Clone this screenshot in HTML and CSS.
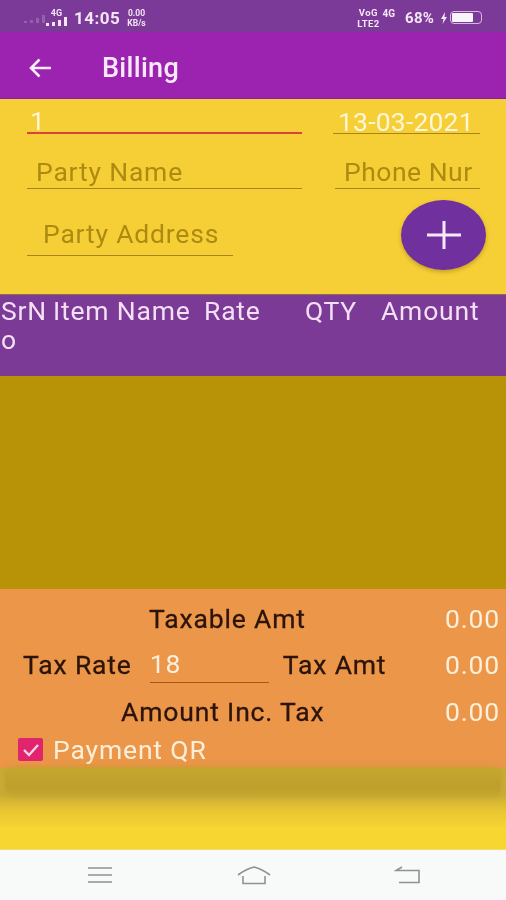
FILE: index.html
```html
<!DOCTYPE html>
<html lang="en">
<head>
<meta charset="utf-8">
<title>Billing</title>
<link rel="stylesheet" href="styles.css">
</head>
<body>
<div class="screen">
  <header class="status">
    <div class="status-left">
      <svg class="sig-faint" width="28" height="12" viewBox="0 0 28 12"><g fill="#a878b8"><rect x="0" y="9" width="3" height="2"/><rect x="6" y="8" width="3" height="3"/><rect x="12" y="6" width="3" height="5"/><rect x="18" y="3" width="3" height="8"/></g></svg>
      <div class="sig">
        <span class="tiny">4G</span>
        <svg width="21" height="9" viewBox="0 0 21 9"><g fill="#f3e6f6"><rect x="0" y="6" width="3" height="3"/><rect x="6" y="5" width="3" height="4"/><rect x="12" y="3" width="3" height="6"/><rect x="18" y="0" width="3" height="9"/></g></svg>
      </div>
      <span class="clock">14:05</span>
      <span class="speed">0.00<br>KB/s</span>
    </div>
    <div class="status-right">
      <span class="speed">VoG<br>LTE2</span>
      <span class="tiny net">4G</span>
      <span class="clock pct">68%</span>
      <svg width="8" height="12" viewBox="0 0 8 12"><path d="M5 0 1 7h2.500L2.500 12 7 5H4.500z" fill="#f3e6f6"/></svg>
      <div class="battery"><div class="battery-fill"></div></div>
    </div>
  </header>

  <div class="toolbar">
    <svg class="back" width="24" height="22" viewBox="0 0 24 22"><path d="M23 11H3M11.500 2.500 3 11l8.500 8.500" fill="none" stroke="#fbeefc" stroke-width="2.600"/></svg>
    <h1 class="title">Billing</h1>
  </div>

  <section class="form">
    <div class="row row-one">
      <div class="field field-main field-active"><span class="val">1</span></div>
      <div class="field field-side"><span class="val date">13-03-2021</span></div>
    </div>
    <div class="row row-two">
      <div class="field field-main"><span class="hint">Party Name</span></div>
      <div class="field field-side field-phone"><span class="hint hint-phone">Phone Nur</span></div>
    </div>
    <div class="row row-three">
      <div class="field field-addr"><span class="hint">Party Address</span></div>
      <button class="fab" type="button" aria-label="Add">
        <svg width="34" height="28" viewBox="0 0 34 28"><path d="M0 14h34M17 0v28" stroke="#f7e9fb" stroke-width="3" fill="none"/></svg>
      </button>
    </div>
  </section>

  <div class="table-head">
    <span class="srno">SrNo</span>
    <span>Item Name</span>
    <span>Rate</span>
    <span>QTY</span>
    <span>Amount</span>
  </div>

  <div class="list"></div>

  <section class="totals">
    <div class="total-row row-taxable">
      <span class="label">Taxable Amt</span>
      <span class="amount">0.00</span>
    </div>
    <div class="total-row row-rate">
      <span class="label">Tax Rate</span>
      <div class="rate-input"><span class="rate-val">18</span></div>
      <span class="label">Tax Amt</span>
      <span class="amount">0.00</span>
    </div>
    <div class="total-row row-inc">
      <span class="label">Amount Inc. Tax</span>
      <span class="amount">0.00</span>
    </div>
    <div class="qr">
      <span class="check">
        <svg width="18" height="14" viewBox="0 0 18 14"><path d="M2 7l5 5 9-10" fill="none" stroke="#f9d4e4" stroke-width="2.400"/></svg>
      </span>
      <span class="qr-label">Payment QR</span>
    </div>
  </section>

  <div class="under">
    <div class="under-shadow"></div>
  </div>

  <nav class="navbar">
    <svg width="26" height="18" viewBox="0 0 26 18"><path d="M1 2h24M1 9h24M1 16h24" stroke="#8f9294" stroke-width="1.600" fill="none"/></svg>
    <svg width="34" height="20" viewBox="0 0 34 20"><path d="M1 10Q9 4 17 2 25 4 33 10M6 11v7.500h22V11" stroke="#8f9294" stroke-width="1.600" fill="none"/></svg>
    <svg width="26" height="18" viewBox="0 0 26 18"><path d="M8 1 2 4.500 25 4.500V16.500H5" stroke="#8f9294" stroke-width="1.600" fill="none"/></svg>
  </nav>
</div>
</body>
</html>
```

FILE: styles.css
```css
* { box-sizing: border-box; }
html, body { margin: 0; padding: 0; }
body { background: #f8f9f9; font-family: Roboto, "Liberation Sans", sans-serif; }
.screen { width: 506px; height: 900px; display: flex; flex-direction: column; overflow: hidden; filter: blur(.6px); }

.status { height: 32px; background: #7b3a98; color: #f3e6f6; display: flex; justify-content: space-between; align-items: center; padding: 3px 24px 0 24px; }
.status-left, .status-right { display: flex; align-items: center; }
.sig-faint { margin-right: -6px; opacity: .6; }
.sig { display: flex; flex-direction: column; align-items: center; margin-right: 7px; }
.tiny { font-size: 9px; font-weight: 700; line-height: 8px; }
.clock { font-size: 17px; font-weight: 700; letter-spacing: .5px; }
.speed { font-size: 8.500px; font-weight: 700; line-height: 10px; margin-left: 7px; text-align: center; }
.status-right .speed { margin-left: 0; font-size: 9.500px; line-height: 11px; letter-spacing: .4px; }
.net { margin: -8px 0 0 3px; font-size: 10px; }
.pct { font-size: 15px; margin: 0 6px 0 10px; letter-spacing: .2px; }
.battery { width: 32px; height: 13px; margin-left: 2px; border: 1px solid #d6b8e0; border-radius: 4px; padding: 1px; }
.battery-fill { width: 21px; height: 100%; background: #f9f3fb; border-radius: 1px; }

.toolbar { height: 67px; background: #9c22b0; display: flex; align-items: center; padding: 5px 0 0 28px; border-bottom: 1px solid #8c1fa0; }
.title { margin: 0 0 0 50px; font-size: 27px; font-weight: 500; color: #f9e9fb; letter-spacing: .3px; }

.form { height: 195px; background: #f6cf37; padding: 0 26px 0 27px; font-size: 26.500px; letter-spacing: .8px; }
.row { display: flex; justify-content: space-between; }
.row-one { height: 35px; }
.row-two { height: 55px; }
.row-three { height: 67px; align-items: flex-end; position: relative; }
.field { border-bottom: 1.500px solid #a78518; display: flex; align-items: flex-end; line-height: 30px; }
.field-main { width: 275px; padding: 0 0 1px 9px; }
.field-side { width: 147px; padding: 0 0 0 5px; }
.field-phone { width: 145px; padding: 0 0 1px 9px; }
.field-addr { width: 206px; padding: 0 0 6px 16px; }
.field-active { border-bottom: 2.500px solid #d9443a; padding: 0 0 0 3px; }
.val { color: #fdf6d8; white-space: nowrap; line-height: 22px; }
.date { letter-spacing: .2px; }
.hint { color: #ad8a12; white-space: nowrap; }
.hint-phone { letter-spacing: .5px; }
.fab { width: 85px; height: 70px; margin: 0 -6px -14px 0; border: 0; border-radius: 50%; background: #70309e; box-shadow: 0 2px 4px rgba(100, 70, 0, .35); display: flex; align-items: center; justify-content: center; padding: 0; }

.table-head { height: 82px; background: #7b3a96; color: #f3e0f5; font-size: 26.500px; letter-spacing: .8px; line-height: 29px; display: grid; grid-template-columns: 53px 151px 101px 76px 1fr; padding-top: 1px; align-content: start; border-top: 1px solid #8f6a50; }
.srno { width: 50px; word-break: break-all; padding-left: 1px; }

.list { height: 213px; background: #b89207; }

.totals { height: 179px; background: #ec9649; padding: 6px 6px 0 0; font-size: 26.500px; letter-spacing: .85px; color: #2c140a; }
.total-row { display: flex; align-items: center; height: 46.500px; }
.label { -webkit-text-stroke: .3px #2c140a; }
.amount { margin-left: auto; color: #fcf0dc; }
.row-taxable .label { margin-left: 149px; }
.row-rate > .label:first-child { margin-left: 23px; }
.rate-input { width: 119px; height: 36px; margin: 0 14px 0 18px; border-bottom: 1.500px solid #a8590f; color: #fdeee0; line-height: 33px; }
.row-inc .label { margin-left: 121px; }
.qr { display: flex; align-items: center; height: 30px; padding-left: 18px; color: #fcefd9; }
.check { width: 25px; height: 23px; background: #e0246e; border-radius: 2px; display: flex; align-items: center; justify-content: center; }
.qr-label { margin-left: 10px; }

.under { height: 82px; background: linear-gradient(#c8ab35 0, #c8ab35 32%, #e8c532 52%, #f8d632 76%, #f8d632 100%); padding: 0 6px; border-bottom: 1px solid #f6dd6a; }
.under-shadow { height: 26px; background: linear-gradient(#c5a62e, #bf9f2c 70%, #c3a42e); box-shadow: 0 0 5px 2px rgba(192, 160, 44, .7); border-radius: 6px; }

.navbar { height: 50px; background: #f8f9f9; display: flex; align-items: center; justify-content: space-between; padding: 0 86px 0 87px; }
```
